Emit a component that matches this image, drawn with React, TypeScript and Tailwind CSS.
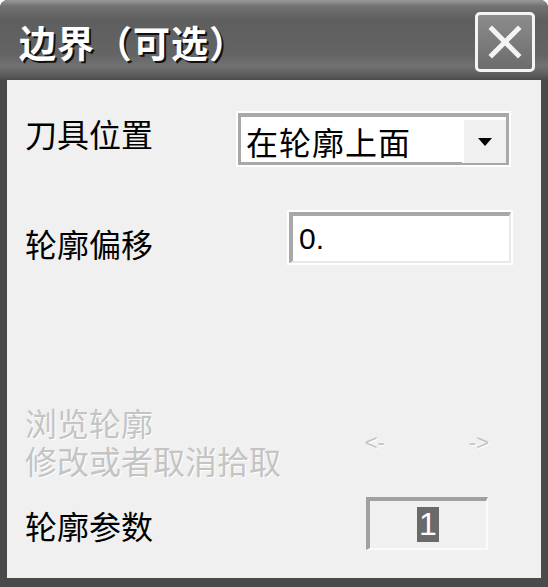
const font = { fontFamily: '"Noto Sans CJK SC", "Liberation Sans", sans-serif' };

const App = () => {
  return (
    <div className="w-[548px] h-[587px] bg-white" style={font}>
      <div className="w-full h-full flex flex-col bg-[#4a4a4a] rounded-t-[8px] overflow-hidden">
        {/* title bar */}
        <div className="h-[80px] flex items-center justify-between pl-[19px] pr-[13px] pt-[4px] bg-[linear-gradient(to_bottom,#9a9a9a_0px,#727272_6px,#5e5e5e_20px,#646464_55px,#727272_66px,#5a5a5a_76px,#4a4a4a_80px)]">
          <span className="text-[37px] font-bold text-white leading-none tracking-[1px] [text-shadow:2px_2px_0_#111]">
            边界（可选）
          </span>
          <div className="w-[60px] h-[60px] border-[3px] border-[#f4f4f4] rounded-[5px] bg-[linear-gradient(to_bottom,#8c8c8c,#6c6c6c)] flex items-center justify-center">
            <svg width="34" height="34" viewBox="0 0 34 34">
              <path d="M4 4 L30 30 M30 4 L4 30" stroke="#f4f4f4" strokeWidth="5" strokeLinecap="square" />
            </svg>
          </div>
        </div>

        {/* body */}
        <div className="flex-1 mx-[7px] mb-[9px] bg-[#f0f0f0] pl-[18px] pr-[30px] flex flex-col text-[32px] leading-none text-black">
          {/* row 1 */}
          <div className="mt-[33px] flex justify-between items-start">
            <span className="mt-[4px]">刀具位置</span>
            <div className="w-[271px] h-[52px] mr-[2px] bg-white border-t-[4px] border-l-[3px] border-t-[#a8a8a8] border-l-[#a8a8a8] border-r-[3px] border-b-[3px] border-r-[#a8a8a8] border-b-[#a8a8a8] outline outline-[2px] outline-white flex items-center justify-between">
              <span className="pl-[5px] pt-[2px] tracking-[1px]">在轮廓上面</span>
              <div className="w-[44px] h-[45px] mt-[2px] bg-[#f0f0f0] border-t-[2px] border-l-[2px] border-[#ffffff] flex items-center justify-center">
                <svg width="16" height="10" viewBox="0 0 16 10">
                  <path d="M1 1 H15 L8 9 Z" fill="#000" />
                </svg>
              </div>
            </div>
          </div>

          {/* row 2 */}
          <div className="mt-[47px] flex justify-between items-start">
            <span className="mt-[15px]">轮廓偏移</span>
            <div className="w-[222px] h-[51px] bg-white border-t-[4px] border-l-[4px] border-t-[#a8a8a8] border-l-[#a8a8a8] border-r-[2px] border-b-[2px] border-r-[#e8e8e8] border-b-[#e8e8e8] outline outline-[2px] outline-white flex items-center">
              <span className="pl-[6px] text-[30px]" style={{ fontFamily: '"Liberation Sans Narrow", "Liberation Sans", sans-serif' }}>0.</span>
            </div>
          </div>

          {/* disabled row */}
          <div className="mt-[140px] flex justify-between items-center">
            <div className="flex flex-col text-[#c4c4c4] [text-shadow:1px_1px_0_#ffffff] leading-[38px]">
              <span>浏览轮廓</span>
              <span>修改或者取消拾取</span>
            </div>
            <div className="flex gap-[84px] mr-[22px] mt-[4px] text-[22px] text-[#c4c4c4] [text-shadow:1px_1px_0_#ffffff]" style={{ fontFamily: '"Liberation Sans", sans-serif' }}>
              <span>&lt;-</span>
              <span>-&gt;</span>
            </div>
          </div>

          {/* row 4 */}
          <div className="mt-[18px] flex justify-between items-center">
            <span className="mt-[2px]">轮廓参数</span>
            <div className="w-[122px] h-[53px] mr-[23px] bg-[#f0f0f0] border-t-[4px] border-l-[4px] border-t-[#a0a0a0] border-l-[#a0a0a0] border-r-[2px] border-b-[2px] border-r-[#fafafa] border-b-[#fafafa] flex items-center justify-center">
              <span className="bg-[#6a6a6a] text-white text-[32px] leading-[35px] px-[2px]" style={{ fontFamily: '"Liberation Sans", sans-serif' }}>1</span>
            </div>
          </div>
        </div>
      </div>
    </div>
  );
};

export default App;
